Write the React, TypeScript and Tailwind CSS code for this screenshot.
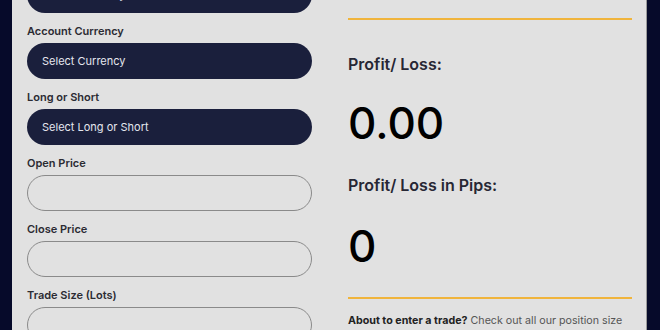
const font = { fontFamily: 'Inter, "Noto Sans", sans-serif' };

function SelectField({ label, placeholder }: { label?: string; placeholder: string }) {
  return (
    <div className="flex flex-col">
      {label && <label className="mb-[4px] h-[16px] text-[11px] font-semibold leading-[16px] text-[#2b2b33]">{label}</label>}
      <div className="flex h-[36px] items-center rounded-full bg-[#1a1f3c] px-[15px] text-[11px] text-[#e4e6ee]">
        {placeholder}
      </div>
    </div>
  );
}

function InputField({ label }: { label: string }) {
  return (
    <div className="flex flex-col">
      <label className="mb-[4px] h-[16px] text-[11px] font-semibold leading-[16px] text-[#2b2b33]">{label}</label>
      <input
        type="text"
        className="h-[36px] w-full rounded-full border-[1.5px] border-[#8a8a8a] bg-transparent px-[15px] text-[11px] outline-none"
      />
    </div>
  );
}

export default function App() {
  return (
    <div className="h-[330px] w-[660px] overflow-hidden bg-[#060a2a] px-[12px] pr-[13px]" style={font}>
      <div className="flex h-full gap-[36px] overflow-hidden border-r border-[#9a9a9a] bg-[#e1e1e1] pl-[15px] pr-[14px]">
        {/* Inputs */}
        <div className="mt-[-23px] flex w-[285px] shrink-0 flex-col gap-[10px]">
          <SelectField placeholder="Select Currency Pair" />
          <SelectField label="Account Currency" placeholder="Select Currency" />
          <SelectField label="Long or Short" placeholder="Select Long or Short" />
          <InputField label="Open Price" />
          <InputField label="Close Price" />
          <InputField label="Trade Size (Lots)" />
        </div>

        {/* Results */}
        <div className="flex flex-1 flex-col">
          <div className="mt-[18px] h-[2px] bg-[#f0b43c]" />
          <div className="mt-[33px] text-[16px] font-semibold leading-[22px] text-[#272734]">Profit/ Loss:</div>
          <div className="mt-[24px] text-[44px] font-medium leading-[48px] text-black">0.00</div>
          <div className="mt-[27px] text-[16px] font-semibold leading-[22px] text-[#272734]">Profit/ Loss in Pips:</div>
          <div className="mt-[26px] text-[44px] font-medium leading-[48px] text-black">0</div>
          <div className="mt-[27px] h-[2px] bg-[#f0b43c]" />
          <p className="mt-[14px] whitespace-nowrap text-[10.7px] leading-[16px] text-[#555]">
            <span className="font-bold text-[#222]">About to enter a trade?</span> Check out all our position size
          </p>
        </div>
      </div>
    </div>
  );
}
